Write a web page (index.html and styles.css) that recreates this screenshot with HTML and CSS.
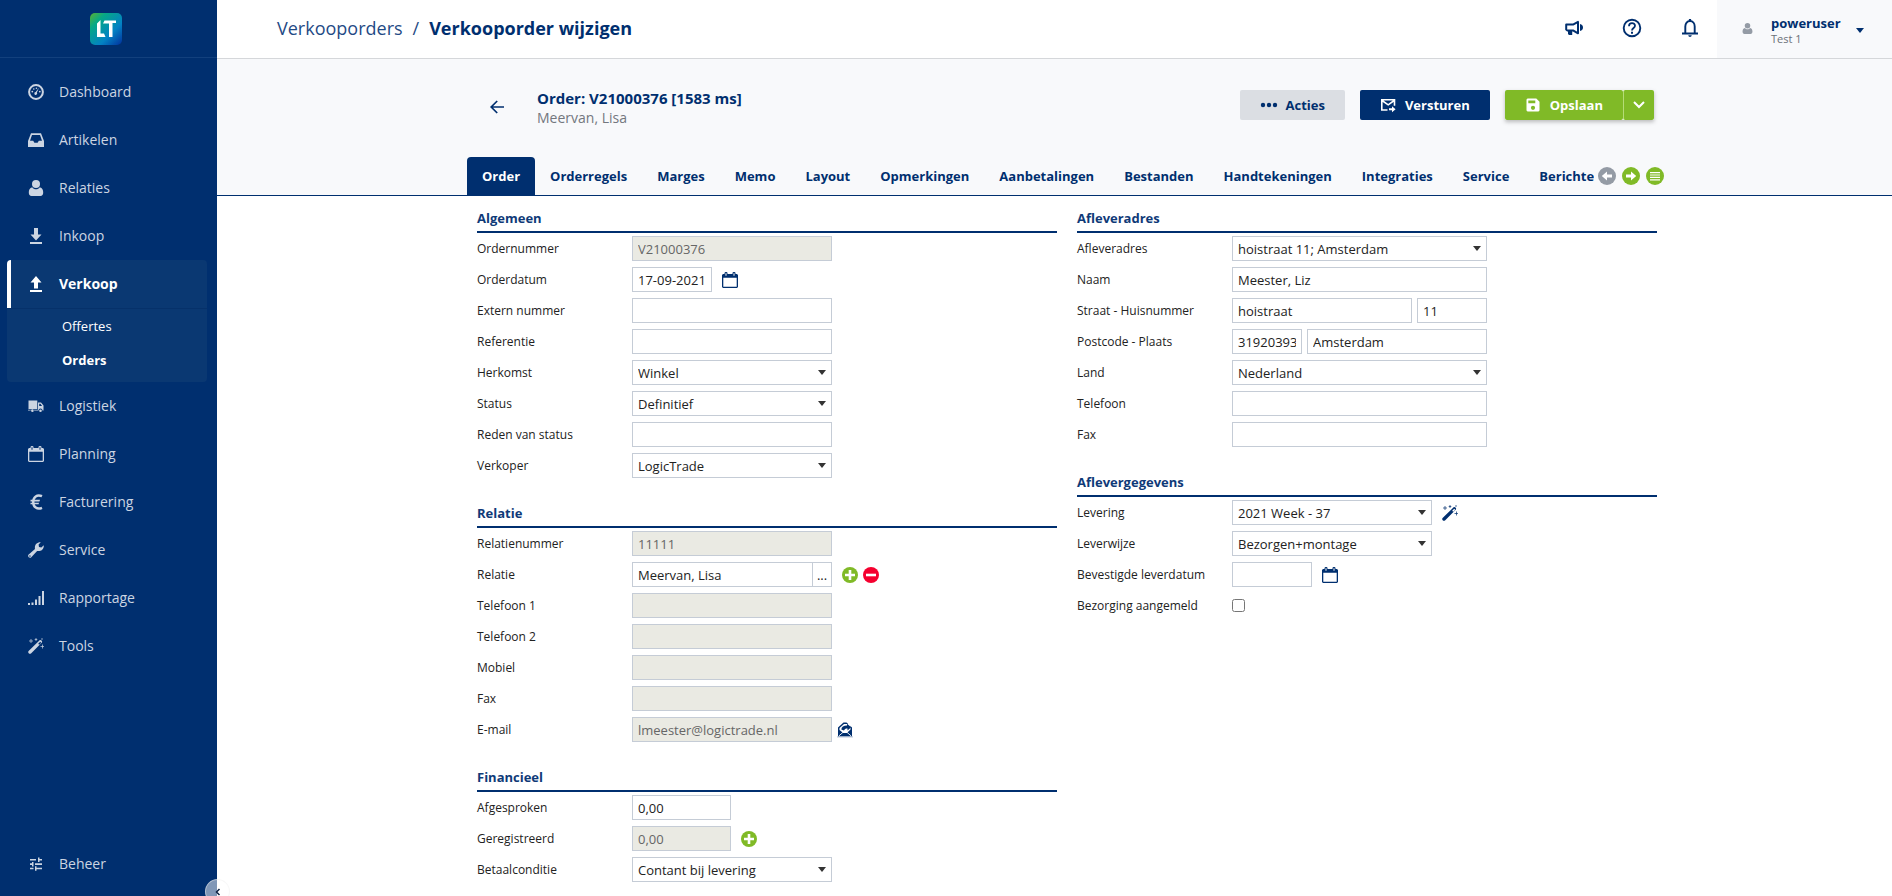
FILE: index.html
```html
<!DOCTYPE html>
<html lang="nl">
<head>
<meta charset="utf-8">
<title>Verkooporder wijzigen</title>
<link rel="stylesheet" href="styles.css">
</head>
<body>
<svg class="sprite" aria-hidden="true">
  <defs>
    <linearGradient id="logo-fill" x1="0" y1="0" x2="1" y2="1">
      <stop offset="0" stop-color="#5ab031"/>
      <stop offset=".25" stop-color="#06a886"/>
      <stop offset=".65" stop-color="#0382c4"/>
      <stop offset="1" stop-color="#02309c"/>
    </linearGradient>
  </defs>
  <symbol id="i-dash" viewBox="0 0 16 16"><circle cx="8" cy="8" r="6.9" fill="none" stroke="currentColor" stroke-width="2"/><path d="M11 3.8 8.9 8.6a1.4 1.4 0 1 1-1.2-.6z"/><circle cx="4.3" cy="7.6" r=".9"/><circle cx="5.8" cy="5" r=".8"/><circle cx="8.4" cy="4.2" r=".8"/><circle cx="11.8" cy="7.6" r=".9"/></symbol>
  <symbol id="i-inbox" viewBox="0 0 16 16"><path fill-rule="evenodd" d="M3 1.3h10L16 9v6H0V9zM4 3 2 8.7h3.2l1.2 2h3.2l1.2-2H14L12 3z"/></symbol>
  <symbol id="i-user" viewBox="0 0 16 16"><circle cx="8" cy="4" r="4"/><path d="M4.2 7.2c1 1.4 2.300 2 3.800 2s2.800-.6 3.800-2C14.400 7.800 15.200 10 15.200 12.500c0 2.300-1 3.500-2.800 3.500H3.600C1.800 16 .8 14.800.8 12.500.8 10 1.600 7.800 4.200 7.200z"/></symbol>
  <symbol id="i-down" viewBox="0 0 16 16"><path d="M6 0h4v6.500h3.500L8 12.500 2.500 6.500H6zM2 14h12v2H2z"/></symbol>
  <symbol id="i-up" viewBox="0 0 16 16"><path d="M6 12.500h4V6.500h3.500L8 0 2.500 6.500H6zM2 14h12v2H2z"/></symbol>
  <symbol id="i-truck" viewBox="0 0 16 16"><path fill-rule="evenodd" d="M.5 2.500h8.800v8.500H.5zM10 4.500h3l2.500 3V12.500h-1a2 2 0 0 0-4 0H10zM11.200 5.700v2.400h2.900l-1.700-2.400zM0 11.700h10v.9H6.300a2 2 0 0 0-3.800 0H0z"/><circle cx="4.400" cy="12.800" r="1.300"/><circle cx="12.500" cy="12.800" r="1.300"/></symbol>
  <symbol id="i-cal" viewBox="0 0 16 16"><path fill-rule="evenodd" d="M1 2h1.500V1.200a1.200 1.200 0 0 1 1-1.200h.8a1.200 1.200 0 0 1 1.200 1.200V2h5V1.200A1.200 1.200 0 0 1 11.700 0h.6a1.200 1.200 0 0 1 1.200 1.200V2H15l1 1v12l-1 1H1l-1-1V3zM1.300 5.800v8.900h13.400V5.800zM3.500 1.300v2.400h1V1.300zM11.500 1.300v2.400h1V1.300z"/></symbol>
  <symbol id="i-euro" viewBox="0 0 16 16"><path fill="none" stroke="currentColor" stroke-width="2.400" d="M14 2.200C9 0 5.200 3 5.200 8s3.800 8 8.800 5.800"/><path d="M2.500 5.700H12l-.5 1.700h-9zM2.500 8.700H11l-.4 1.600H2.500z"/></symbol>
  <symbol id="i-wrench" viewBox="0 0 16 16"><path d="M.7 12.600 7 7C6.300 3.200 8.600.1 12.800.3L10.600 2.600 11 4.900l2.300.5 2.500-2.100c.2 4.200-3.100 6.300-6.700 5.700L3.300 15.300c-1.600 1.700-4.400-1-2.600-2.700zM2 13.200a.8.8 0 1 0 .8.9z"/></symbol>
  <symbol id="i-bars" viewBox="0 0 16 16"><path d="M0 13h2v2H0zM3.500 12.500h2V15h-2zM7 9.500h2V15H7zM10.500 6h2v9h-2zM14 1h2v14h-2z"/></symbol>
  <symbol id="i-wand" viewBox="0 0 16 16"><path fill-rule="evenodd" d="m.6 13 11-10.700c1.100-1 3.300 1 2.300 2.200L3 15.400c-1.500 1.500-3.700-1-2.400-2.400zm9.600-7.200 1 1L13.200 4.800l-1-1z"/><path fill="none" stroke="currentColor" stroke-width=".7" d="M3 1v4M1 3h4M8 0v3M6.700 1.500h2.600M14.500 6.500v4M12.500 8.500h4M14 0v2"/></symbol>
  <symbol id="i-sliders" viewBox="0 0 16 16"><path d="M2 3h6v1.600H2zM10 1.500h1.500V3H14v1.600h-2.500V6H10zM2 7.300h2V6h1.500v4.500H4V9H2zM7 7.300h7V9H7zM2 11.700h3.500v1.600H2zM7 10.300h1.500v1.400H14v1.600H8.500v1.500H7z"/></symbol>
  <symbol id="i-horn" viewBox="0 0 20 20"><path fill="none" stroke="currentColor" stroke-width="2" stroke-linejoin="round" d="M2.200 6.600H9l5-2.700v11.400l-5-2.900H3.400l-1.200-1z"/><path d="M4 12h4.200v5H5l-1-1zM16 6c2 .4 3 1.600 3 3.500S18 12.600 16 13z"/></symbol>
  <symbol id="i-help" viewBox="0 0 20 20"><circle cx="10" cy="10" r="8.300" fill="none" stroke="currentColor" stroke-width="1.900"/><path fill="none" stroke="currentColor" stroke-width="1.800" d="M7 8.200c0-4 6-4 6-.4 0 2.200-3 2.300-3 4.700"/><path d="M9 13.800h2v1.900H9z"/></symbol>
  <symbol id="i-bell" viewBox="0 0 20 20"><path fill="none" stroke="currentColor" stroke-width="1.900" d="M5.300 15.500V8.600C5.300 5.300 7.200 3 10 3s4.700 2.300 4.700 5.600v6.900"/><path d="M2 14.600h16v1.900H2zM8.300 17.300h3.400c0 2.200-3.400 2.200-3.400 0zM8.900 1h2.200v2.500H8.900z"/></symbol>
  <symbol id="i-back" viewBox="0 0 16 16"><path fill="none" stroke="currentColor" stroke-width="1.700" d="M15 8H2.500M8.200 2 2.200 8l6 6"/></symbol>
  <symbol id="i-dots" viewBox="0 0 18 16"><circle cx="3" cy="8" r="2.200"/><circle cx="9" cy="8" r="2.200"/><circle cx="15" cy="8" r="2.200"/></symbol>
  <symbol id="i-send" viewBox="0 0 16 16"><path fill="none" stroke="currentColor" stroke-width="1.600" d="M7.500 13H1.800V2.800h12.700v6M2 3.500l6.200 4.300 6-4.300"/><path d="M9 11.300h3V9.200l3.600 3.100-3.600 3v-2.100H9z"/></symbol>
  <symbol id="i-save" viewBox="0 0 16 16"><path fill-rule="evenodd" d="M2.500 1.500h8.800L14.500 4.700v8.800l-1 1h-11l-1-1v-11zM3.300 3.500v2.700h7V3.500zM8 8.700a2.100 2.100 0 1 0 0 4.200 2.100 2.100 0 0 0 0-4.200z"/></symbol>
  <symbol id="i-chev" viewBox="0 0 16 16"><path fill="none" stroke="currentColor" stroke-width="2" d="m3 5 5 5 5-5"/></symbol>
  <symbol id="i-plus" viewBox="0 0 16 16"><circle cx="8" cy="8" r="8"/><path fill="#fff" d="M6.700 3h2.600v3.700H13v2.600H9.300V13H6.700V9.300H3V6.700h3.700z"/></symbol>
  <symbol id="i-minus" viewBox="0 0 16 16"><circle cx="8" cy="8" r="8"/><path fill="#fff" d="M3 6.700h10v2.600H3z"/></symbol>
  <symbol id="i-next" viewBox="0 0 18 18"><circle cx="9" cy="9" r="9"/><path fill="#fff" d="M4 7.500h5V4.600L14.200 9 9 13.400v-2.900H4z"/></symbol>
  <symbol id="i-prev" viewBox="0 0 18 18"><circle cx="9" cy="9" r="9"/><path fill="#fff" d="M14 7.500H9V4.600L3.800 9 9 13.400v-2.900h5z"/></symbol>
  <symbol id="i-list" viewBox="0 0 18 18"><circle cx="9" cy="9" r="9"/><path fill="#fff" d="M4 5h10v1.200H4zM4 7.400h10v1.200H4zM4 9.800h10V11H4zM4 12.200h10v1.200H4z"/></symbol>
  <symbol id="i-mail" viewBox="0 0 16 16"><path d="M1 5.400 6.500.6h3L15 5.400V14.400H1z"/><path fill="#fff" d="M2.500 6 7 2h6.500v5.500L9.800 11H6.200L2.500 8z"/><path d="M4.300 7.500C4.500 4.800 6.500 3.600 10 3.600V1.800l4.200 3.400L10.500 8.600V6.500C8.600 6.400 7.600 7 7 8.600z"/><path fill="none" stroke="#fff" stroke-width=".9" d="m1.800 14 4.800-4.200L8 10.900l1.400-1.100 4.800 4.200"/><path fill="#a9b9d0" d="M0 14.400h16v1H0z"/></symbol>
</svg>

<div class="app">
  <aside class="sidebar">
    <div class="brand">
      <svg class="logo" viewBox="0 0 32 32" role="img" aria-label="LT"><rect width="32" height="32" rx="5" fill="url(#logo-fill)"/><path fill="#fff" d="M7 10.500 10.500 7v13.500H14L15.500 24H7zM13 10.500 14.500 7.500H26V10h-3.500v14H19V10.500z"/></svg>
    </div>
    <nav class="menu" aria-label="Hoofdmenu">
      <a class="item" href="#"><svg><use href="#i-dash"/></svg>Dashboard</a>
      <a class="item" href="#"><svg><use href="#i-inbox"/></svg>Artikelen</a>
      <a class="item" href="#"><svg><use href="#i-user"/></svg>Relaties</a>
      <a class="item" href="#"><svg><use href="#i-down"/></svg>Inkoop</a>
      <div class="group">
        <a class="item current" href="#"><svg><use href="#i-up"/></svg>Verkoop</a>
        <div class="submenu">
          <a class="subitem" href="#">Offertes</a>
          <a class="subitem chosen" href="#">Orders</a>
        </div>
      </div>
      <a class="item" href="#"><svg><use href="#i-truck"/></svg>Logistiek</a>
      <a class="item" href="#"><svg><use href="#i-cal"/></svg>Planning</a>
      <a class="item" href="#"><svg><use href="#i-euro"/></svg>Facturering</a>
      <a class="item" href="#"><svg><use href="#i-wrench"/></svg>Service</a>
      <a class="item" href="#"><svg><use href="#i-bars"/></svg>Rapportage</a>
      <a class="item" href="#"><svg><use href="#i-wand"/></svg>Tools</a>
      <a class="item last" href="#"><svg><use href="#i-sliders"/></svg>Beheer</a>
    </nav>
    <button class="collapse" type="button" aria-label="Menu inklappen"><svg viewBox="0 0 8 10"><path fill="none" stroke="currentColor" stroke-width="2" d="M6 1 2 5l4 4"/></svg></button>
  </aside>

  <div class="main">
    <header class="topbar">
      <div class="crumbs"><a href="#">Verkooporders</a><span>/</span><h1>Verkooporder wijzigen</h1></div>
      <div class="tools">
        <button type="button" aria-label="Nieuws"><svg><use href="#i-horn"/></svg></button>
        <button type="button" aria-label="Help"><svg><use href="#i-help"/></svg></button>
        <button type="button" aria-label="Meldingen"><svg><use href="#i-bell"/></svg></button>
      </div>
      <button class="account" type="button">
        <svg><use href="#i-user"/></svg>
        <span class="who"><strong>poweruser</strong><small>Test 1</small></span>
        <span class="caret"></span>
      </button>
    </header>

    <section class="pagehead">
      <div class="titlebar">
        <button class="back" type="button" aria-label="Terug"><svg><use href="#i-back"/></svg></button>
        <div class="title"><h2>Order: V21000376 [1583 ms]</h2><p>Meervan, Lisa</p></div>
        <div class="actions">
          <button class="btn grey" type="button"><svg class="dots"><use href="#i-dots"/></svg>Acties</button>
          <button class="btn navy" type="button"><svg><use href="#i-send"/></svg>Versturen</button>
          <div class="split">
            <button class="btn green" type="button"><svg><use href="#i-save"/></svg>Opslaan</button>
            <button class="btn green more" type="button" aria-label="Meer opties"><svg><use href="#i-chev"/></svg></button>
          </div>
        </div>
      </div>
      <nav class="tabs" aria-label="Tabbladen">
        <div class="tablist">
          <a class="tab active" href="#">Order</a><a class="tab" href="#">Orderregels</a><a class="tab" href="#">Marges</a><a class="tab" href="#">Memo</a><a class="tab" href="#">Layout</a><a class="tab" href="#">Opmerkingen</a><a class="tab" href="#">Aanbetalingen</a><a class="tab" href="#">Bestanden</a><a class="tab" href="#">Handtekeningen</a><a class="tab" href="#">Integraties</a><a class="tab" href="#">Service</a><a class="tab" href="#">Berichten</a>
        </div>
        <div class="tabnav">
          <button class="off" type="button" aria-label="Vorige"><svg><use href="#i-prev"/></svg></button>
          <button type="button" aria-label="Volgende"><svg><use href="#i-next"/></svg></button>
          <button type="button" aria-label="Alle tabbladen"><svg><use href="#i-list"/></svg></button>
        </div>
      </nav>
    </section>

    <form class="columns">
      <div class="column">
        <section class="block">
          <h3>Algemeen</h3>
          <div class="row"><label for="ordernr">Ordernummer</label><input class="m" id="ordernr" value="V21000376" disabled></div>
          <div class="row"><label for="datum">Orderdatum</label><input class="date" id="datum" value="17-09-2021"><button class="ico" type="button" aria-label="Kies datum"><svg><use href="#i-cal"/></svg></button></div>
          <div class="row"><label for="extern">Extern nummer</label><input class="m" id="extern"></div>
          <div class="row"><label for="ref">Referentie</label><input class="m" id="ref"></div>
          <div class="row"><label for="herkomst">Herkomst</label><span class="select m"><select id="herkomst"><option>Winkel</option></select></span></div>
          <div class="row"><label for="status">Status</label><span class="select m"><select id="status"><option>Definitief</option></select></span></div>
          <div class="row"><label for="reden">Reden van status</label><input class="m" id="reden"></div>
          <div class="row"><label for="verkoper">Verkoper</label><span class="select m"><select id="verkoper"><option>LogicTrade</option></select></span></div>
        </section>
        <section class="block">
          <h3>Relatie</h3>
          <div class="row"><label for="relnr">Relatienummer</label><input class="m" id="relnr" value="11111" disabled></div>
          <div class="row"><label for="relatie">Relatie</label><span class="lookup m"><input id="relatie" value="Meervan, Lisa"><button type="button" aria-label="Zoek relatie">...</button></span><span class="icons"><button class="ico add" type="button" aria-label="Toevoegen"><svg><use href="#i-plus"/></svg></button><button class="ico remove" type="button" aria-label="Verwijderen"><svg><use href="#i-minus"/></svg></button></span></div>
          <div class="row"><label for="tel1">Telefoon 1</label><input class="m" id="tel1" disabled></div>
          <div class="row"><label for="tel2">Telefoon 2</label><input class="m" id="tel2" disabled></div>
          <div class="row"><label for="mobiel">Mobiel</label><input class="m" id="mobiel" disabled></div>
          <div class="row"><label for="fax1">Fax</label><input class="m" id="fax1" disabled></div>
          <div class="row tight"><label for="email">E-mail</label><input class="m" id="email" value="lmeester@logictrade.nl" disabled><button class="ico" type="button" aria-label="E-mail sturen"><svg><use href="#i-mail"/></svg></button></div>
        </section>
        <section class="block">
          <h3>Financieel</h3>
          <div class="row"><label for="afgesproken">Afgesproken</label><input class="amount" id="afgesproken" value="0,00"></div>
          <div class="row"><label for="geregistreerd">Geregistreerd</label><input class="amount" id="geregistreerd" value="0,00" disabled><button class="ico add" type="button" aria-label="Betaling toevoegen"><svg><use href="#i-plus"/></svg></button></div>
          <div class="row"><label for="conditie">Betaalconditie</label><span class="select m"><select id="conditie"><option>Contant bij levering</option></select></span></div>
        </section>
      </div>
      <div class="column">
        <section class="block">
          <h3>Afleveradres</h3>
          <div class="row"><label for="adres">Afleveradres</label><span class="select l"><select id="adres"><option>hoistraat 11; Amsterdam</option></select></span></div>
          <div class="row"><label for="naam">Naam</label><input class="l" id="naam" value="Meester, Liz"></div>
          <div class="row"><label for="straat">Straat - Huisnummer</label><span class="pair l"><input id="straat" value="hoistraat"><input class="s" value="11" aria-label="Huisnummer"></span></div>
          <div class="row"><label for="postcode">Postcode - Plaats</label><span class="pair l"><input class="s" id="postcode" value="31920393"><input value="Amsterdam" aria-label="Plaats"></span></div>
          <div class="row"><label for="land">Land</label><span class="select l"><select id="land"><option>Nederland</option></select></span></div>
          <div class="row"><label for="tel">Telefoon</label><input class="l" id="tel"></div>
          <div class="row"><label for="fax">Fax</label><input class="l" id="fax"></div>
        </section>
        <section class="block">
          <h3>Aflevergegevens</h3>
          <div class="row"><label for="levering">Levering</label><span class="select m"><select id="levering"><option>2021 Week - 37</option></select></span><button class="ico" type="button" aria-label="Bereken levering"><svg><use href="#i-wand"/></svg></button></div>
          <div class="row"><label for="leverwijze">Leverwijze</label><span class="select m"><select id="leverwijze"><option>Bezorgen+montage</option></select></span></div>
          <div class="row"><label for="leverdatum">Bevestigde leverdatum</label><input class="date" id="leverdatum"><button class="ico" type="button" aria-label="Kies leverdatum"><svg><use href="#i-cal"/></svg></button></div>
          <div class="row"><label for="aangemeld">Bezorging aangemeld</label><input type="checkbox" id="aangemeld"></div>
        </section>
      </div>
    </form>
  </div>
</div>
</body>
</html>
```
FILE: styles.css
```css
:root {
  --navy: #002f6f;
  --green: #80ba27;
  --pale: #f8f9fb;
  --line: #c5ccd6;
}

* { box-sizing: border-box; }

body {
  margin: 0;
  background: #fff;
  color: #222;
  font: 13px/18px "Open Sans", sans-serif;
}

h1, h2, h3, p { margin: 0; }
a { color: inherit; text-decoration: none; }
svg { display: block; flex: none; fill: currentColor; }
button { padding: 0; border: 0; background: none; color: inherit; font: inherit; cursor: pointer; }
.sprite { position: absolute; width: 0; height: 0; }

.app { display: grid; grid-template-columns: 217px minmax(0, 1fr); min-height: 100vh; }

/* Sidebar */
.sidebar { position: relative; display: flex; flex-direction: column; background: var(--navy); color: #ccd5e2; }
.brand { display: flex; justify-content: center; align-items: center; height: 58px; padding-right: 5px; border-bottom: 1px solid #12407d; }
.logo { width: 32px; height: 32px; }
.menu { display: flex; flex-direction: column; flex: 1; padding: 10px 10px 8px 7px; font-size: 14px; }
.item { display: flex; align-items: center; gap: 15px; height: 48px; padding-left: 21px; }
.item svg { width: 16px; height: 16px; }
.group { border-radius: 4px; background: #0a3872; color: #fff; overflow: hidden; }
.current { padding-left: 17px; border-left: 4px solid #fff; font-weight: 700; }
.submenu { padding: 0 0 5px; border-top: 1px solid #06316a; font-size: 13px; }
.subitem { display: flex; align-items: center; height: 34px; padding-left: 55px; }
.chosen { font-weight: 700; }
.last { margin-top: auto; }
.collapse { position: absolute; right: -13px; bottom: -8px; z-index: 1; display: flex; align-items: center; justify-content: center; width: 25px; height: 25px; border: 1px solid rgba(240, 240, 240, .5); border-radius: 50%; background: rgba(255, 255, 255, .5); color: #0b1f40; clip-path: inset(0 0 8px 0); }
.collapse svg { width: 6px; height: 8px; }

/* Top bar */
.topbar { display: flex; height: 59px; border-bottom: 1px solid #d5d7da; color: var(--navy); }
.crumbs { display: flex; align-items: center; flex: 1; gap: 10px; padding: 0 0 2px 60px; color: #1f4a85; font-size: 18px; }
.crumbs h1 { color: var(--navy); font-size: 18px; font-weight: 700; }
.tools { display: flex; align-items: center; gap: 38px; padding: 0 17px 2px 0; }
.tools svg { width: 20px; height: 20px; }
.account { display: flex; align-items: center; width: 175px; padding: 0 0 2px 25px; background: var(--pale); text-align: left; }
.account svg { width: 11px; height: 11px; color: #949ba5; }
.who { flex: 1; margin-left: 18px; padding-top: 5px; }
.who strong, .who small { display: block; line-height: 16px; }
.who strong { font-weight: 700; }
.who small { color: #6b7078; font-size: 11px; }
.caret { margin: 4px 28px 0 0; border: 4px solid transparent; border-top: 5px solid var(--navy); border-bottom: 0; }

/* Page heading and tabs */
.pagehead { padding: 0 225px 0 250px; border-bottom: 1px solid var(--navy); background: var(--pale); color: var(--navy); }
.titlebar { display: flex; align-items: flex-start; height: 98px; padding: 29px 13px 0 22px; }
.back { margin-top: 11px; }
.back svg { width: 16px; height: 16px; }
.title { flex: 1; margin-left: 32px; }
.title h2 { font-size: 15px; font-weight: 700; line-height: 20px; }
.title p { color: #73777e; font-size: 14px; line-height: 20px; }
.actions { display: flex; gap: 15px; padding-top: 2px; }
.btn { display: flex; align-items: center; gap: 9px; height: 30px; padding: 0 20px; border-radius: 2px; font-weight: 700; }
.btn svg { width: 16px; height: 16px; }
.btn .dots { width: 18px; }
.grey { gap: 8px; background: #dbdee3; }
.navy { background: var(--navy); color: #fff; }
.split { display: flex; box-shadow: 0 2px 4px rgba(0, 0, 0, .25); }
.green { background: var(--green); color: #fff; }
.more { padding: 0 7px; border-left: 1px solid #b5dc77; }
.tabs { display: flex; align-items: center; padding-right: 3px; }
.tablist { display: flex; flex: 1; min-width: 0; overflow: hidden; }
.tab { padding: 10px 15px; border-radius: 4px 4px 0 0; font-weight: 700; white-space: nowrap; }
.active { background: var(--navy); color: #fff; }
.tabnav { display: flex; gap: 6px; padding-left: 4px; color: var(--green); }
.tabnav svg { width: 18px; height: 18px; }
.off { color: #949ba5; }

/* Form */
.columns { display: grid; grid-template-columns: 1fr 1fr; gap: 20px; padding: 0 235px 0 260px; }
.column { display: flex; flex-direction: column; gap: 13px; }
.block { display: flex; flex-direction: column; gap: 6px; }
.block h3 { height: 37px; margin-bottom: -3px; padding-top: 13px; border-bottom: 2px solid var(--navy); color: #0f3a78; font-size: 13px; font-weight: 700; }
.row { display: flex; align-items: center; gap: 10px; height: 25px; }
.row label { width: 145px; font-size: 12px; white-space: nowrap; }
.tight { gap: 5px; }
.tight label { width: 150px; }
.m { width: 200px; }
.l { width: 255px; }
.date { width: 80px; }
.amount { width: 99px; }
input:not([type="checkbox"]), select { height: 25px; min-width: 0; padding: 0 5px; border: 1px solid var(--line); border-radius: 0; background: #fff; color: #222; font: inherit; }
input:disabled { background: #eaeae3; color: #666; }
input:not([type="checkbox"]):disabled { background: #eaeae3; color: #666; }
input[type="checkbox"] { margin: 0; }
.select { position: relative; display: flex; }
.select select { flex: 1; appearance: none; }
.select::after { content: ""; position: absolute; top: 10px; right: 6px; border: 4px solid transparent; border-top: 5px solid #333; border-bottom: 0; pointer-events: none; }
.lookup { display: flex; }
.lookup input { flex: 1; }
.lookup button { width: 19px; height: 25px; border: 1px solid var(--line); border-left: 0; background: #fff; }
.pair { display: flex; gap: 5px; }
.pair input { flex: 1; }
.pair .s { flex: 0 0 70px; }
.icons { display: flex; gap: 5px; }
.ico { color: var(--navy); }
.ico svg { width: 16px; height: 16px; }
.add { color: var(--green); }
.remove { color: #f5002f; }
```
